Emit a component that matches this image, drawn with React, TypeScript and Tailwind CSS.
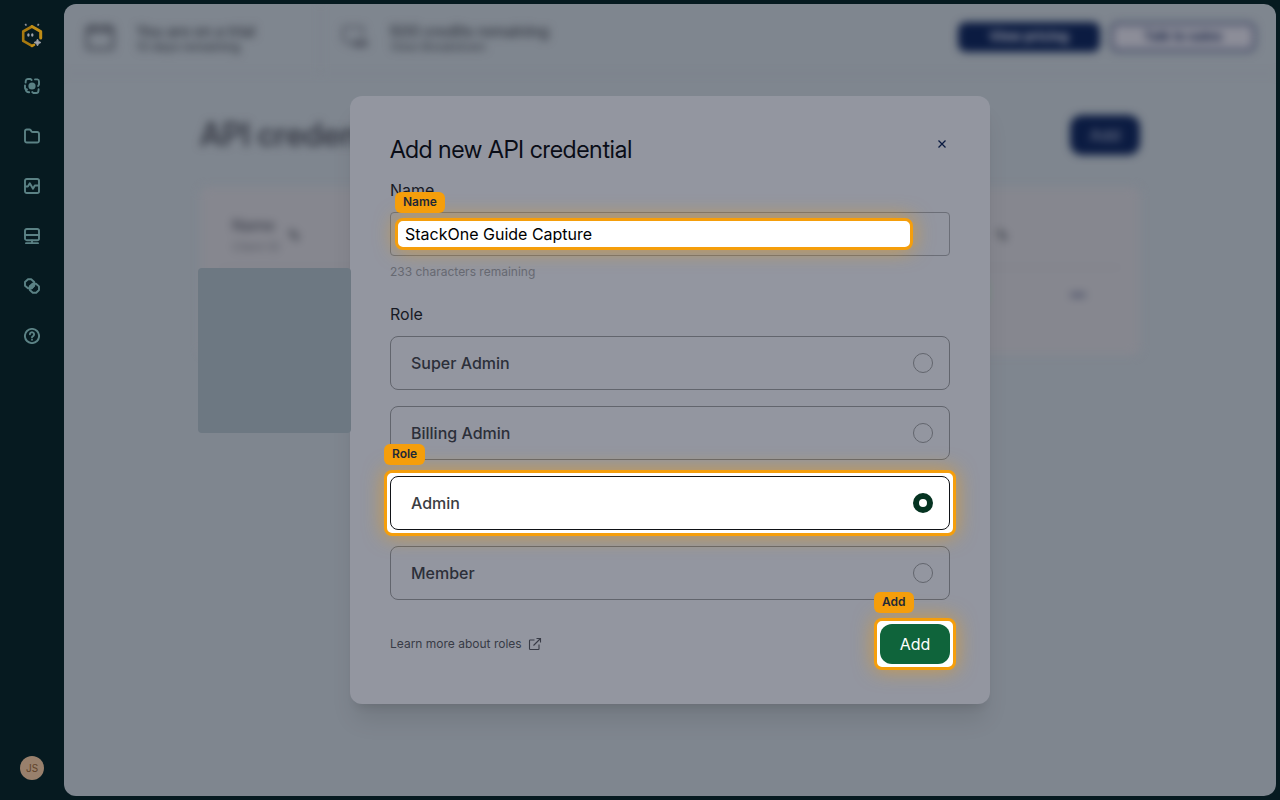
import React from "react";

type IconProps = { children: React.ReactNode };

function NavIcon({ children }: IconProps) {
  return (
    <svg
      viewBox="0 0 16 16"
      className="size-4"
      fill="none"
      stroke="currentColor"
      strokeWidth="1.9"
      strokeLinecap="round"
      strokeLinejoin="round"
      aria-hidden="true"
    >
      {children}
    </svg>
  );
}

const navItems = [
  {
    label: "Connectors",
    icon: (
      <NavIcon>
        <circle cx="8" cy="8" r="3.6" fill="currentColor" stroke="none" />
        <path d="M7.600 2 6.500 1H3.800A2 2 0 0 0 1.800 2.700L1.600 4.600" />
        <path d="M1 7.400v2c0 1.200.9 2 2 2" />
        <path d="M14.100 8 15 6.600V3.400a2 2 0 0 0-1.600-2h-2.400" />
        <path d="M8.200 14.100l1.200.9h3a2 2 0 0 0 2-1.800l.200-1.900" />
        <path d="M1.800 11.400c.2 1.900 1.500 3 3.400 2.900" />
      </NavIcon>
    ),
  },
  {
    label: "Projects",
    icon: (
      <NavIcon>
        <path d="M1 3.200A1.700 1.700 0 0 1 2.700 1.500h2.700c.5 0 .9.200 1.200.6l.9 1.300c.3.4.7.6 1.200.6h4.500A1.800 1.800 0 0 1 15 5.800v6.900a1.800 1.800 0 0 1-1.800 1.800H2.800A1.800 1.800 0 0 1 1 12.700z" />
      </NavIcon>
    ),
  },
  {
    label: "Logs",
    icon: (
      <NavIcon>
        <rect x="1" y="1" width="14" height="14" rx="1.8" />
        <path d="M1.500 8.500h2.300l2-3.300 3.200 5.600 1.800-3.300h3.700" />
      </NavIcon>
    ),
  },
  {
    label: "Accounts",
    icon: (
      <NavIcon>
        <rect x="1" y="1" width="14" height="11.200" rx="1.800" />
        <path d="M1 7h14M8 12.500v2M2 15.200h12" />
      </NavIcon>
    ),
  },
  {
    label: "Integrations",
    icon: (
      <NavIcon>
        <path d="M4 1.300h3.200l3 2.700v3.600L7.600 10.300H4L1 7.700V4z" />
        <path d="M8.800 5.700H12l3 2.700V12l-2.800 2.700H8.800L5.800 12V8.400z" />
        <path d="M8.800 5.700h1.400v1.900L7.600 10.300H5.800V8.400z" fill="currentColor" />
      </NavIcon>
    ),
  },
  {
    label: "Help",
    icon: (
      <NavIcon>
        <circle cx="8" cy="8" r="7.1" />
        <path d="M5.900 6.300a2.100 2.100 0 1 1 3.200 1.800c-.7.4-1.100.7-1.100 1.300" />
        <path d="M8 11.700v.1" />
      </NavIcon>
    ),
  },
];

function Logo() {
  return (
    <svg viewBox="0 0 22 26" className="h-[26px] w-[22px]" aria-hidden="true">
      <path d="M11 3.500 2.200 8.500v9.400l8.800 5" fill="none" stroke="#a8790f" strokeWidth="2.600" strokeLinejoin="round" strokeLinecap="round" />
      <path d="M11 3.500l8.700 5v6.400" fill="none" stroke="#c08d16" strokeWidth="3" strokeLinejoin="round" strokeLinecap="round" />
      <path d="M11 22.900l2-1" stroke="#c08d16" strokeWidth="2.600" strokeLinecap="round" />
      <path d="M4.300.8l1 1.800M17.700.8l-1 1.800" stroke="#8f9299" strokeWidth="1.700" />
      <ellipse cx="7.400" cy="12" rx="1.200" ry="1.700" fill="#a0a3ab" />
      <ellipse cx="11.300" cy="12" rx="1.200" ry="1.700" fill="#a0a3ab" />
      <path d="M16.500 16q.5 3 3.500 3.500-3 .5-3.500 3.500-.5-3-3.500-3.500 3-.5 3.500-3.500z" fill="#a0a3ab" stroke="#a0a3ab" strokeWidth=".8" />
    </svg>
  );
}

function SortIcon() {
  return (
    <svg viewBox="0 0 12 12" className="size-3" fill="none" stroke="currentColor" strokeWidth="2" aria-hidden="true">
      <path d="M3.500 9V1.500M1.500 3.500l2-2 2 2M8.500 3v7.500M6.500 8.500l2 2 2-2" />
    </svg>
  );
}

function Tag({ children }: IconProps) {
  return (
    <span className="absolute -top-[26px] left-0 h-[21px] rounded-md bg-[#f59e0b] px-2 text-xs leading-5 font-semibold text-[#1f2937]">
      {children}
    </span>
  );
}

function Spotlight({ label, children }: { label: string; children: React.ReactNode }) {
  return (
    <div className="relative isolate">
      <div className="absolute -inset-1.5 -z-10 rounded-lg border-3 border-[#f59e0b] bg-white shadow-[0_0_20px_rgba(245,158,11,0.6)]">
        <div className="relative -top-[3px] -left-[3px]">
          <Tag>{label}</Tag>
        </div>
      </div>
      {children}
    </div>
  );
}

function RoleOption({ name, selected = false }: { name: string; selected?: boolean }) {
  return (
    <label
      className={
        selected
          ? "flex h-[54px] items-center justify-between rounded-lg border border-[#111317] pr-4 pl-5 font-medium text-[#3b3d42]"
          : "flex h-[54px] items-center justify-between rounded-lg border border-[#62656d] pr-4 pl-5 font-medium text-[#2c2f39]"
      }
    >
      {name}
      <input
        type="radio"
        name="role"
        defaultChecked={selected}
        className="size-5 appearance-none rounded-full border border-[#62656d] checked:border-6 checked:border-[#053321] checked:bg-white"
      />
    </label>
  );
}

function TopBar() {
  return (
    <header className="flex h-[70px] items-stretch border-b border-[#777e88]">
      <div className="flex w-[257px] items-center gap-5 border-r border-[#777e88] pb-1 pl-5">
        <svg viewBox="0 0 32 32" className="size-8" fill="none" stroke="#484c57" strokeWidth="3" aria-hidden="true">
          <rect x="3" y="6" width="26" height="22" rx="2" />
          <path d="M3 10h26M9 3v6M23 3v6" />
        </svg>
        <div>
          <p className="font-['Inter_Display','Inter',sans-serif] leading-5 font-semibold">You are on a trial</p>
          <p className="text-xs leading-3 font-semibold">13 days remaining</p>
        </div>
      </div>
      <div className="flex items-center gap-5 pb-1 pl-[17px]">
        <svg viewBox="0 0 32 32" className="size-8" fill="none" stroke="#555964" strokeWidth="2.500" aria-hidden="true">
          <path d="M13 22H9l-4-4V8q0-2 2-2h16q2 0 2 2v7" />
          <rect x="15" y="20" width="14" height="5" rx="2.500" fill="#555964" />
        </svg>
        <div>
          <p className="font-['Inter_Display','Inter',sans-serif] leading-5 font-semibold">500 credits remaining</p>
          <p className="text-xs leading-3 font-medium">View Breakdown</p>
        </div>
      </div>
      <div className="ml-auto flex items-center gap-2.5 pr-5 pb-1">
        <button className="h-[30px] w-[142px] rounded-lg bg-[#0b1b41] text-[13px] font-bold text-[#9699a4]">
          View pricing
        </button>
        <button className="h-[30px] w-[146px] rounded-lg border-3 border-[#3f4763] bg-[#8c8d98] text-[13px] font-bold text-[#1c2848]">
          Talk to sales
        </button>
      </div>
    </header>
  );
}

function Credentials() {
  return (
    <section className="mx-auto max-w-[940px] pt-[41px]">
      <div className="flex items-center justify-between">
        <h1 className="font-['Inter_Display','Inter',sans-serif] text-[32px] leading-10 font-semibold text-[#373a45]">
          API credentials
        </h1>
        <button className="h-10 w-[70px] rounded-xl bg-[#0b1b41] text-[#7d8394]">Add</button>
      </div>
      <div className="mt-8 h-[168px] rounded-lg bg-[#86878f] px-5 pt-4">
        <table className="w-full table-fixed text-left">
          <thead>
            <tr className="h-16 border-b border-[#787a84]">
              <th className="w-[740px] pl-3">
                <div className="flex items-center gap-2">
                  <div>
                    <div className="font-['Inter_Display','Inter',sans-serif] leading-6 font-semibold text-[#484b56]">Name</div>
                    <div className="text-xs leading-5 font-normal text-[#555862]">Client ID</div>
                  </div>
                  <SortIcon />
                </div>
              </th>
              <th className="pl-9">
                <SortIcon />
              </th>
              <th className="w-[70px]" />
            </tr>
          </thead>
          <tbody>
            <tr className="h-14">
              <td />
              <td>
                <span className="inline-block h-6 w-7 rounded-md bg-[#789087]" />
              </td>
              <td className="pl-5">
                <button aria-label="Row actions" className="block h-3 w-4 text-[#4a5068]">
                  <svg viewBox="0 0 16 12" fill="currentColor" aria-hidden="true">
                    <circle cx="3" cy="6" r="2.500" />
                    <circle cx="8" cy="6" r="2.500" />
                    <circle cx="13" cy="6" r="2.500" />
                  </svg>
                </button>
              </td>
            </tr>
          </tbody>
        </table>
      </div>
    </section>
  );
}

function CredentialDialog() {
  return (
    <div
      role="dialog"
      aria-labelledby="dialog-title"
      className="w-[640px] rounded-xl bg-[#9396a0] p-10 text-[#171a24] shadow-xl"
    >
      <div className="flex items-start justify-between">
        <h2
          id="dialog-title"
          className="font-['Inter_Display','Inter',sans-serif] text-2xl leading-7 text-[#0a0d17]"
        >
          Add new API credential
        </h2>
        <button aria-label="Close" className="size-4">
          <svg viewBox="0 0 16 16" className="size-4" stroke="#0b1b41" strokeWidth="1.300" aria-hidden="true">
            <path d="M4.500 4.500l7 7M11.500 4.500l-7 7" />
          </svg>
        </button>
      </div>

      <label htmlFor="credential-name" className="mt-3.5 block leading-6">
        Name
      </label>
      <div className="mt-2.5 flex h-11 items-center rounded-sm border border-[#6b6e77] pr-9 pl-1">
        <div className="relative flex-1">
          <input
            id="credential-name"
            defaultValue="StackOne Guide Capture"
            className="block h-8 w-full rounded-lg border-3 border-[#f59e0b] bg-white px-[7px] text-black shadow-[0_0_20px_rgba(245,158,11,0.6)] outline-none"
          />
          <Tag>Name</Tag>
        </div>
      </div>
      <p className="mt-2 text-xs leading-4 text-[#666972]">233 characters remaining</p>

      <fieldset className="mt-[22px]">
        <legend className="leading-6">Role</legend>
        <div className="mt-2.5 flex flex-col gap-4">
          <RoleOption name="Super Admin" />
          <RoleOption name="Billing Admin" />
          <Spotlight label="Role">
            <RoleOption name="Admin" selected />
          </Spotlight>
          <RoleOption name="Member" />
        </div>
      </fieldset>

      <div className="mt-6 flex items-center justify-between">
        <a href="#roles" className="flex items-center gap-1.5 text-xs leading-4 text-[#383b46]">
          Learn more about roles
          <svg viewBox="0 0 14 14" className="size-3.5" fill="none" stroke="currentColor" strokeWidth="1.100" aria-hidden="true">
            <path d="M6.500 3H2.200q-.7 0-.7.7v8.100q0 .7.700.7h8.100q.7 0 .7-.7V7.500" />
            <path d="M8.500 1.500h4v4M12.500 1.500L5.500 8.500" />
          </svg>
        </a>
        <Spotlight label="Add">
          <button className="block h-10 w-[70px] rounded-xl bg-[#0f643b] text-white">Add</button>
        </Spotlight>
      </div>
    </div>
  );
}

export default function App() {
  return (
    <div className="flex min-h-screen bg-[#061a20] font-['Inter',sans-serif] text-base">
      <nav className="flex w-16 shrink-0 flex-col items-center pt-[23px] pb-5">
        <a href="#home" aria-label="Home">
          <Logo />
        </a>
        <div className="mt-[29px] flex flex-col gap-[34px] text-[#5b8285]">
          {navItems.map((item) => (
            <a key={item.label} href="#nav" aria-label={item.label}>
              {item.icon}
            </a>
          ))}
        </div>
        <button className="mt-auto flex size-6 items-center justify-center rounded-full bg-[#98806c] text-[10px] text-[#5f4229]">
          JS
        </button>
      </nav>

      <main className="relative my-1 mr-1 flex-1 overflow-hidden rounded-xl bg-[#7f868f] text-[#3c404a]">
        <div className="blur-[4px]">
          <TopBar />
          <Credentials />
        </div>
        <div className="absolute inset-0 flex items-center justify-center">
          <CredentialDialog />
        </div>
        <div className="absolute top-[264px] left-[134px] h-[165px] w-[153px] rounded-sm bg-[#6d7882]" />
      </main>
    </div>
  );
}
